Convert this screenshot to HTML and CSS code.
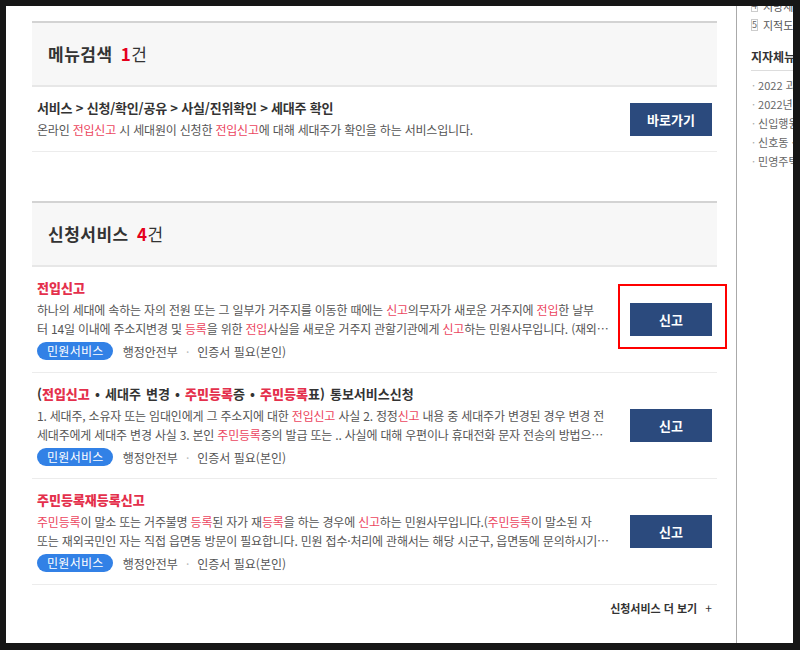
FILE: index.html
```html
<!DOCTYPE html>
<html lang="ko">
<head>
    <meta charset="UTF-8">
    <meta name="viewport" content="width=device-width, initial-scale=1.0">
    <title>통합검색 결과</title>
    <link rel="stylesheet" href="styles.css">
</head>
<body>

<div class="window">
    <div class="content">

        <!-- 메뉴검색 -->
        <section class="result">
            <h2 class="result-title">메뉴검색 <em>1</em><span>건</span></h2>
            <ul class="result-list">
                <li class="result-item">
                    <div class="item-info">
                        <p class="item-path">서비스 &gt; 신청/확인/공유 &gt; 사실/진위확인 &gt; 세대주 확인</p>
                        <p class="item-desc">온라인 <b>전입신고</b> 시 세대원이 신청한 <b>전입신고</b>에 대해 세대주가 확인을 하는 서비스입니다.</p>
                    </div>
                    <a class="item-btn" href="#">바로가기</a>
                </li>
            </ul>
        </section>

        <!-- 신청서비스 -->
        <section class="result">
            <h2 class="result-title">신청서비스 <em>4</em><span>건</span></h2>
            <ul class="result-list">
                <li class="result-item">
                    <div class="item-info">
                        <p class="item-name"><b>전입신고</b></p>
                        <p class="item-desc">하나의 세대에 속하는 자의 전원 또는 그 일부가 거주지를 이동한 때에는 <b>신고</b>의무자가 새로운 거주지에 <b>전입</b>한 날부<br>터 14일 이내에 주소지변경 및 <b>등록</b>을 위한 <b>전입</b>사실을 새로운 거주지 관할기관에게 <b>신고</b>하는 민원사무입니다. (재외국민은 읍면동 주민센터에 방문하여 신청하시기 바랍니다.)</p>
                        <div class="item-tags">
                            <span class="tag-type">민원서비스</span>
                            <span class="tag-org">행정안전부</span>
                            <span class="tag-dot">·</span>
                            <span class="tag-cert">인증서 필요(본인)</span>
                        </div>
                    </div>
                    <div class="btn-wrap">
                        <a class="item-btn" href="#">신고</a>
                        <span class="mark"></span>
                    </div>
                </li>
                <li class="result-item">
                    <div class="item-info">
                        <p class="item-name">(<b>전입신고</b> • 세대주 변경 • <b>주민등록</b>증 • <b>주민등록</b>표) 통보서비스신청</p>
                        <p class="item-desc">1. 세대주, 소유자 또는 임대인에게 그 주소지에 대한 <b>전입신고</b> 사실 2. 정정<b>신고</b> 내용 중 세대주가 변경된 경우 변경 전<br>세대주에게 세대주 변경 사실 3. 본인 <b>주민등록</b>증의 발급 또는 .. 사실에 대해 우편이나 휴대전화 문자 전송의 방법으로 알려주는 서비스입니다.</p>
                        <div class="item-tags">
                            <span class="tag-type">민원서비스</span>
                            <span class="tag-org">행정안전부</span>
                            <span class="tag-dot">·</span>
                            <span class="tag-cert">인증서 필요(본인)</span>
                        </div>
                    </div>
                    <div class="btn-wrap">
                        <a class="item-btn" href="#">신고</a>
                    </div>
                </li>
                <li class="result-item">
                    <div class="item-info">
                        <p class="item-name"><b>주민등록재등록신고</b></p>
                        <p class="item-desc"><b>주민등록</b>이 말소 또는 거주불명 <b>등록</b>된 자가 재<b>등록</b>을 하는 경우에 <b>신고</b>하는 민원사무입니다.(<b>주민등록</b>이 말소된 자<br>또는 재외국민인 자는 직접 읍면동 방문이 필요합니다. 민원 접수·처리에 관해서는 해당 시군구, 읍면동에 문의하시기 바랍니다.)</p>
                        <div class="item-tags">
                            <span class="tag-type">민원서비스</span>
                            <span class="tag-org">행정안전부</span>
                            <span class="tag-dot">·</span>
                            <span class="tag-cert">인증서 필요(본인)</span>
                        </div>
                    </div>
                    <div class="btn-wrap">
                        <a class="item-btn" href="#">신고</a>
                    </div>
                </li>
            </ul>
            <div class="more"><a href="#">신청서비스 더 보기 <span>+</span></a></div>
        </section>

    </div>

    <aside class="side">
        <ol class="rank">
            <li><span class="num">4</span>지방세 납부확인서</li>
            <li><span class="num">5</span>지적도 등본 발급</li>
        </ol>
        <h3 class="side-title">지자체뉴스</h3>
        <ul class="news">
            <li>2022 괴산고추축제 개최</li>
            <li>2022년 제1회 임용시험</li>
            <li>신입행원 채용 안내</li>
            <li>신호동 신축 공사 안내</li>
            <li>민영주택 입주자 모집</li>
        </ul>
    </aside>
</div>

</body>
</html>
```

FILE: styles.css
```css
body {
    margin: 0;
    padding: 0;
    background-color: #161616;
    font-family: "Noto Sans CJK KR", "Noto Sans", sans-serif;
    color: #333;
}
p, ul, ol, h2, h3 {
    margin: 0;
    padding: 0;
}
ul, ol {
    list-style: none;
}
a {
    color: inherit;
    text-decoration: none;
}
.window {
    display: flex;
    margin: 6px 0 0 6px;
    width: 787px;
    height: 637px;
    background-color: #fff;
    overflow: hidden;
}
.content {
    flex: none;
    width: 685px;
    padding: 15px 19px 0 26px;
}
.result + .result {
    margin-top: 49px;
}
.result-title {
    height: 62px;
    line-height: 62px;
    padding-left: 16px;
    background-color: #f7f7f7;
    border-top: 2px solid #d3d3d3;
    border-bottom: 2px solid #e7e7e7;
    font-size: 17px;
    letter-spacing: 0.5px;
    font-weight: bold;
    color: #333;
}
.result-title em {
    margin-left: 3px;
    font-style: normal;
    color: #e5001c;
}
.result-title span {
    font-weight: normal;
}
.result-item {
    display: flex;
    align-items: center;
    padding: 12px 0 12px 5px;
    border-bottom: 1px solid #ececec;
}
.item-info {
    flex: 1;
    min-width: 0;
}
.item-path, .item-name {
    font-size: 13px;
    line-height: 18px;
    font-weight: bold;
    color: #333;
}
.item-path {
    letter-spacing: -0.2px;
}
.item-name {
    word-spacing: 1.5px;
}
.item-name b {
    color: #e4304c;
}
.item-desc {
    max-width: 574px;
    margin-top: 3px;
    font-size: 12px;
    line-height: 19px;
    letter-spacing: -0.2px;
    color: #555;
    display: -webkit-box;
    -webkit-line-clamp: 2;
    -webkit-box-orient: vertical;
    overflow: hidden;
}
.item-desc b {
    font-weight: normal;
    color: #ec4660;
}
.item-tags {
    display: flex;
    align-items: center;
    margin-top: 4px;
    height: 18px;
    font-size: 12px;
    color: #555;
}
.tag-type {
    padding: 0 9px 0 10px;
    line-height: 18px;
    letter-spacing: 0.3px;
    border-radius: 9px;
    background-color: #3281e6;
    color: #fff;
}
.tag-org {
    margin-left: 10px;
}
.tag-dot {
    margin: 0 8px;
    color: #bbb;
}
.btn-wrap {
    position: relative;
    flex: none;
    margin-right: 5px;
}
.item-btn {
    display: block;
    width: 82px;
    height: 33px;
    line-height: 33px;
    text-align: center;
    background-color: #2b4a7d;
    color: #fff;
    font-size: 13px;
    font-weight: bold;
}
.result-item > .item-btn {
    flex: none;
    margin-right: 5px;
}
/* highlight box drawn over the first button */
.mark {
    position: absolute;
    left: -12px;
    top: -19px;
    width: 109px;
    height: 65px;
    box-sizing: border-box;
    border: 2px solid #ff0000;
}
.more {
    margin-top: 14px;
    padding-right: 5px;
    text-align: right;
    font-size: 11px;
    line-height: 18px;
    font-weight: bold;
    color: #333;
}
.more span {
    margin-left: 5px;
    font-size: 12px;
    font-weight: normal;
}
.side {
    flex: 1;
    padding-left: 14px;
    border-left: 1px solid #aaa;
    overflow: hidden;
    white-space: nowrap;
}
.rank {
    margin-top: -10px;
}
.rank li {
    display: flex;
    align-items: center;
    height: 19px;
    font-size: 11px;
    color: #555;
}
.num {
    width: 10px;
    height: 10px;
    margin-right: 5px;
    border: 1px solid #ccc;
    font-size: 9px;
    line-height: 10px;
    text-align: center;
    color: #666;
}
.side-title {
    margin-top: 14px;
    padding-bottom: 4px;
    border-bottom: 1px solid #ddd;
    font-size: 12px;
    line-height: 18px;
    font-weight: bold;
    color: #333;
}
.news {
    margin-top: 5px;
}
.news li {
    font-size: 11px;
    line-height: 19px;
    color: #666;
}
.news li::before {
    content: "·";
    margin: 0 3px 0 1px;
    color: #aaa;
}
```
